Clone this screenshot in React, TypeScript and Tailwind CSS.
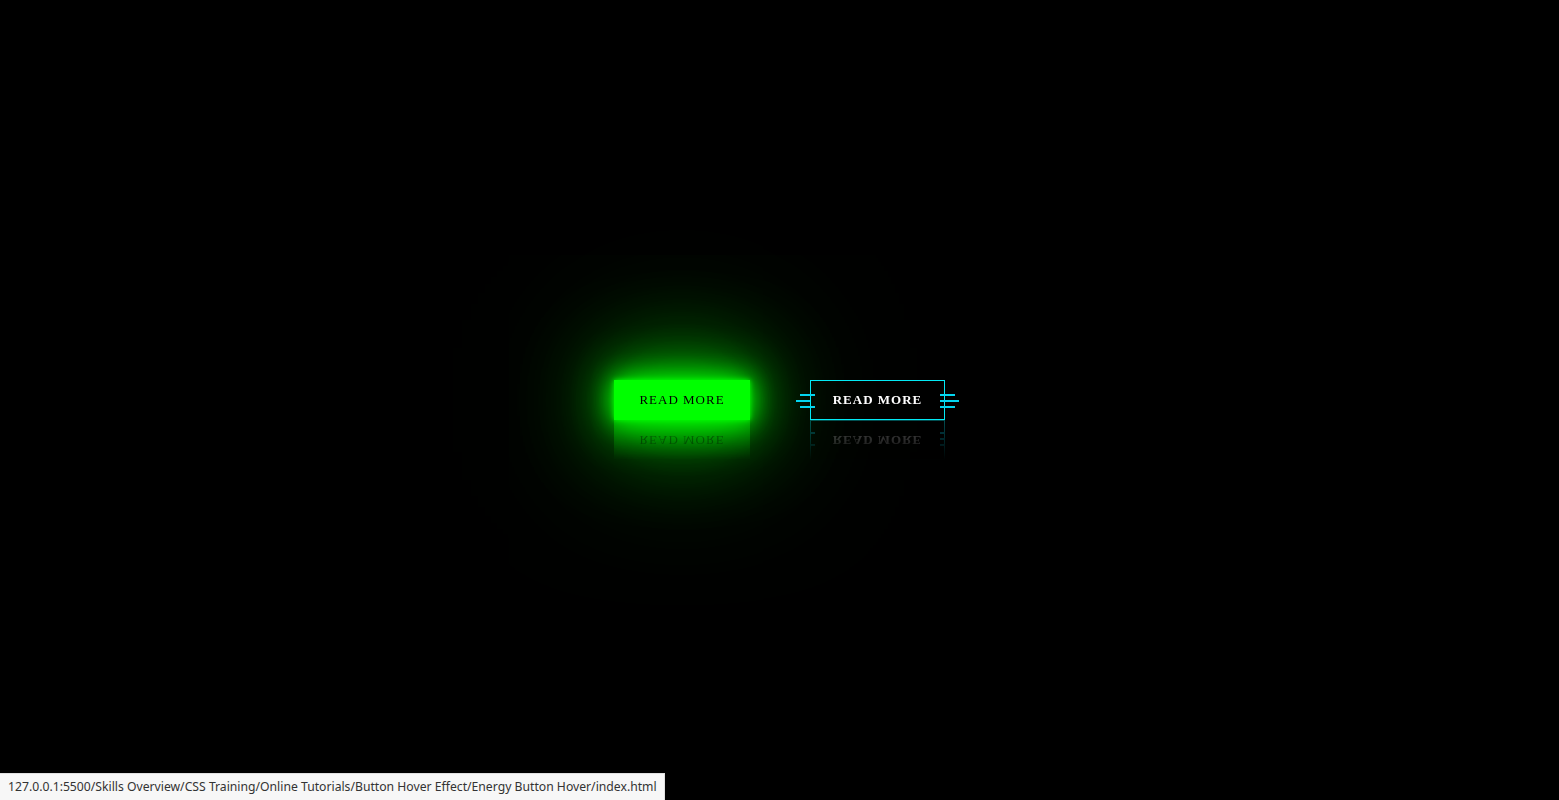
import React from "react";

export default function App() {
  return (
    <div className="relative w-full h-[800px] bg-black overflow-hidden flex items-center justify-center">
      <div className="flex items-center gap-[60px]">
        <div className="shadow-[0_0_50px_#0f0,0_0_100px_#0f0,0_0_160px_#0a0]">
          <a
            className="block w-[136px] h-[40px] bg-[#00ff00] text-black text-[13px] tracking-[1px] flex items-center justify-center shadow-[0_0_5px_#0f0,0_0_25px_#0f0] [-webkit-box-reflect:below_0px_linear-gradient(transparent,#0006)]"
            style={{ fontFamily: '"Liberation Serif", "DejaVu Serif", serif' }}
          >
            READ MORE
          </a>
        </div>
        <a
          className="relative block w-[135px] h-[40px] border border-[#03e9f4] text-white font-bold text-[13px] tracking-[1px] flex items-center justify-center [-webkit-box-reflect:below_0px_linear-gradient(transparent,#0005)]"
          style={{ fontFamily: '"Liberation Serif", "DejaVu Serif", serif' }}
        >
          READ MORE
          <span className="absolute left-[-11px] top-[13px] w-[15px] h-[2px] bg-[#03d5f0]" />
          <span className="absolute left-[-15px] top-[19px] w-[14px] h-[2px] bg-[#03d5f0]" />
          <span className="absolute left-[-11px] top-[25px] w-[15px] h-[2px] bg-[#03d5f0]" />
          <span className="absolute right-[-11px] top-[13px] w-[15px] h-[2px] bg-[#03d5f0]" />
          <span className="absolute right-[-15px] top-[19px] w-[19px] h-[2px] bg-[#03d5f0]" />
          <span className="absolute right-[-11px] top-[25px] w-[15px] h-[2px] bg-[#03d5f0]" />
        </a>
      </div>
      <div
        className="absolute left-0 bottom-0 h-[27px] w-[665px] bg-[#f7f7f7] border-t border-r border-[#e0e0e0] flex items-center pl-[8px] text-[12.2px] text-[#333]"
        style={{ fontFamily: '"Noto Sans", "Open Sans", sans-serif' }}
      >
        127.0.0.1:5500/Skills Overview/CSS Training/Online Tutorials/Button Hover Effect/Energy Button Hover/index.html
      </div>
    </div>
  );
}
